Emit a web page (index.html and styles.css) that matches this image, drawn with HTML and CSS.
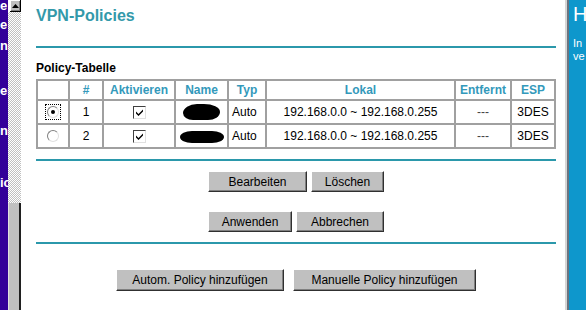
FILE: index.html
```html
<!DOCTYPE html>
<html lang="de">
<head>
<meta charset="utf-8">
<title>VPN-Policies</title>
<link rel="stylesheet" href="styles.css">
</head>
<body>
<div class="page">
  <nav class="nav">
    <span class="nav-item n1">e</span>
    <span class="nav-item n2">e</span>
    <span class="nav-item n3">n</span>
    <span class="nav-item n4">er</span>
    <span class="nav-item n5">n</span>
    <span class="nav-item n6">ic</span>
  </nav>
  <div class="scroll">
    <div class="scroll-up"><svg width="7" height="4" viewBox="0 0 7 4"><path d="M3.5 0 L7 4 L0 4 Z" fill="#000"/></svg></div>
    <div class="scroll-track"></div>
    <div class="scroll-thumb"></div>
  </div>
  <main class="main">
    <h1 class="title">VPN-Policies</h1>
    <div class="rule r1"></div>
    <h2 class="subtitle">Policy-Tabelle</h2>
    <table class="policy">
      <colgroup>
        <col class="c-sel"><col class="c-num"><col class="c-act"><col class="c-name"><col class="c-typ"><col class="c-lok"><col class="c-ent"><col class="c-esp">
      </colgroup>
      <thead>
        <tr><th></th><th>#</th><th>Aktivieren</th><th>Name</th><th>Typ</th><th>Lokal</th><th>Entfernt</th><th>ESP</th></tr>
      </thead>
      <tbody>
        <tr>
          <td class="center"><span class="focus"><span class="radio checked"></span></span></td>
          <td class="center">1</td>
          <td class="center"><span class="check"><svg width="9" height="9" viewBox="0 0 9 9"><path d="M1 3.5 L3.5 6 L8 1.5 L8 3.5 L3.5 8 L1 5.5 Z" fill="#000"/></svg></span></td>
          <td class="center"><span class="blob b1"></span></td>
          <td>Auto</td>
          <td class="center">192.168.0.0 ~ 192.168.0.255</td>
          <td class="center dim">---</td>
          <td class="center">3DES</td>
        </tr>
        <tr>
          <td class="center"><span class="focus off"><span class="radio"></span></span></td>
          <td class="center">2</td>
          <td class="center"><span class="check"><svg width="9" height="9" viewBox="0 0 9 9"><path d="M1 3.5 L3.5 6 L8 1.5 L8 3.5 L3.5 8 L1 5.5 Z" fill="#000"/></svg></span></td>
          <td class="center"><span class="blob b2"></span></td>
          <td>Auto</td>
          <td class="center">192.168.0.0 ~ 192.168.0.255</td>
          <td class="center dim">---</td>
          <td class="center">3DES</td>
        </tr>
      </tbody>
    </table>
    <div class="rule r2"></div>
    <div class="btn-row row1">
      <button class="btn w-bearb">Bearbeiten</button>
      <button class="btn w-losch">Löschen</button>
    </div>
    <div class="btn-row row2">
      <button class="btn w-anw">Anwenden</button>
      <button class="btn w-abb">Abbrechen</button>
    </div>
    <div class="rule r3"></div>
    <div class="btn-row row3">
      <button class="btn w-auto">Autom. Policy hinzufügen</button>
      <button class="btn w-man">Manuelle Policy hinzufügen</button>
    </div>
  </main>
  <div class="sep"></div>
  <aside class="help">
    <div class="help-title">H</div>
    <div class="help-text">In<br>ve</div>
  </aside>
</div>
</body>
</html>
```

FILE: styles.css
```css
html, body {
  margin: 0;
  padding: 0;
  background: #fff;
}
body {
  font-family: "Liberation Sans", Arial, sans-serif;
  font-size: 12px;
  color: #000;
}
.page {
  display: flex;
  width: 586px;
  height: 310px;
  overflow: hidden;
}

/* left nav strip */
.nav {
  width: 8px;
  flex: none;
  background: #330099;
  display: flex;
  flex-direction: column;
  overflow: hidden;
}
.nav-item {
  color: #fff;
  font-weight: bold;
  font-size: 13px;
  line-height: 12px;
  white-space: nowrap;
  display: block;
}
.n1 { margin-top: 0; }
.n2 { margin-top: 7px; }
.n3 { margin-top: 9px; }
.n4 { margin-top: 33px; }
.n5 { margin-top: 28px; }
.n6 { margin-top: 40px; }

/* scrollbar */
.scroll {
  width: 13px;
  flex: none;
  display: flex;
  flex-direction: column;
}
.scroll-up {
  height: 12px;
  margin-left: 2px;
  background: #c0c0c0;
  border-right: 1px solid #000;
  border-bottom: 1px solid #000;
  box-shadow: inset 1px 1px #fff, inset -1px -1px #808080;
  display: flex;
  align-items: center;
  justify-content: center;
  box-sizing: border-box;
}
.scroll-track {
  height: 191px;
  background: repeating-conic-gradient(#c0c0c0 0 25%, #ffffff 0 50%) 0 0 / 2px 2px;
}
.scroll-thumb {
  flex: 1;
  background: #c0c0c0;
  border-right: 2px solid #202020;
  box-shadow: inset 1px 0 #e0e0e0;
}

/* main content */
.main {
  width: 544px;
  flex: none;
  box-sizing: border-box;
  padding: 7px 9px 0 15px;
}
.title {
  margin: 0;
  font-size: 16px;
  line-height: 18px;
  font-weight: bold;
  color: #3399aa;
}
.rule {
  height: 2px;
  background: #2b98ab;
  width: 520px;
}
.r1 { margin-top: 21px; }
.subtitle {
  margin: 13px 0 0;
  font-size: 12px;
  line-height: 14px;
  font-weight: bold;
}
.policy {
  margin-top: 4px;
  width: 520px;
  table-layout: fixed;
  border-collapse: separate;
  border-spacing: 0;
  border: 1px solid #a0a0a0;
}
.c-sel { width: 32px; }
.c-num { width: 34px; }
.c-act { width: 72px; }
.c-name { width: 53px; }
.c-typ { width: 38px; }
.c-lok { width: 189px; }
.c-ent { width: 56px; }
.c-esp { width: 44px; }
.policy th, .policy td {
  border: 1px solid #a0a0a0;
  padding: 0 3px;
  white-space: nowrap;
  overflow: hidden;
}
.policy th {
  height: 18px;
  color: #3399bb;
  font-weight: bold;
  font-size: 12px;
  text-align: center;
}
.policy td {
  height: 22px;
  font-size: 12px;
}
.center { text-align: center; }
.dim { color: #444; }

.focus {
  display: inline-block;
  vertical-align: middle;
  padding: 1px;
  border: 1px dotted #000;
  line-height: 0;
}
.focus.off { border-color: transparent; }
.radio {
  display: inline-block;
  width: 10px;
  height: 10px;
  border-radius: 50%;
  border: 1px solid;
  border-color: #808080 #e0e0e0 #e0e0e0 #808080;
  background: #fff;
  box-sizing: content-box;
  position: relative;
}
.radio.checked::after {
  content: "";
  position: absolute;
  left: 3px;
  top: 3px;
  width: 4px;
  height: 4px;
  border-radius: 50%;
  background: #000;
}
.check {
  display: inline-flex;
  align-items: center;
  justify-content: center;
  vertical-align: middle;
  width: 9px;
  height: 9px;
  padding: 1px;
  background: #fff;
  border: 1px solid;
  border-color: #404040 #e0e0e0 #e0e0e0 #404040;
}
.blob {
  display: inline-block;
  vertical-align: middle;
  background: #000;
}
.b1 {
  width: 37px;
  height: 16px;
  border-radius: 14px 16px 12px 10px / 9px 8px 8px 7px;
}
.b2 {
  width: 44px;
  height: 12px;
  border-radius: 12px / 6px;
}

.r2 { margin-top: 10px; }
.btn-row {
  display: flex;
  justify-content: center;
  width: 520px;
  gap: 4px;
}
.row1 { margin-top: 10px; }
.row2 { margin-top: 19px; }
.r3 { margin-top: 10px; }
.row3 { margin-top: 25px; gap: 9px; }
.btn {
  font-family: "Liberation Sans", Arial, sans-serif;
  font-size: 12px;
  color: #000;
  background: #c0c0c0;
  height: 21px;
  padding: 0;
  margin: 0;
  border: 1px solid;
  border-color: #ffffff #303030 #303030 #ffffff;
  box-shadow: inset -1px -1px #808080;
  box-sizing: border-box;
}
.row3 .btn { height: 22px; }
.w-bearb { width: 99px; }
.w-losch { width: 73px; }
.w-anw { width: 84px; }
.w-abb { width: 88px; }
.w-auto { width: 168px; }
.w-man { width: 183px; }

.sep {
  width: 4px;
  flex: none;
  box-sizing: border-box;
  border-left: 2px solid #d6d6d6;
  border-right: 2px solid #6a7480;
}
.help {
  flex: 1;
  background: #0e97cc;
  color: #fff;
  padding: 3px 0 0 4px;
  white-space: nowrap;
  overflow: hidden;
}
.help-title {
  font-size: 20px;
  line-height: 22px;
}
.help-text {
  margin-top: 12px;
  font-size: 11px;
  line-height: 13px;
}
```
